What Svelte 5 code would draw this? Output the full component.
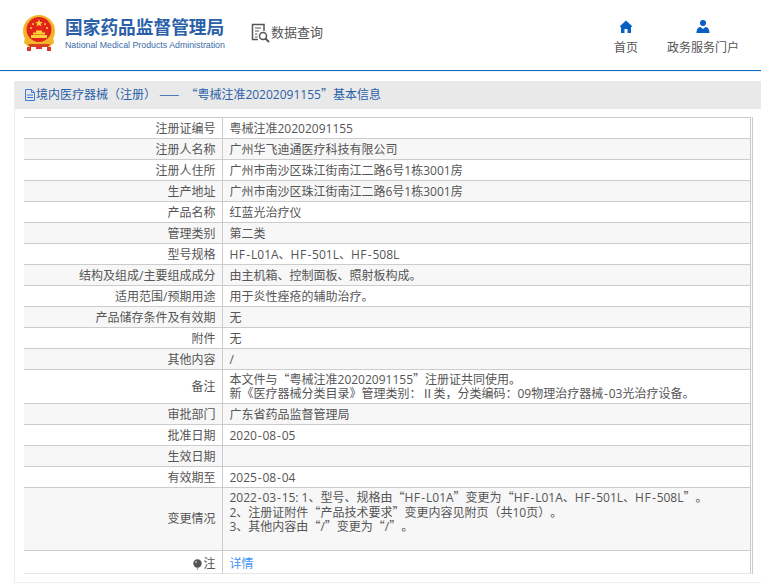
<script>
	const rows = [
		{ label: '注册证编号', value: ['粤械注准20202091155'] },
		{ label: '注册人名称', value: ['广州华飞迪通医疗科技有限公司'] },
		{ label: '注册人住所', value: ['广州市南沙区珠江街南江二路6号1栋3001房'] },
		{ label: '生产地址', value: ['广州市南沙区珠江街南江二路6号1栋3001房'] },
		{ label: '产品名称', value: ['红蓝光治疗仪'] },
		{ label: '管理类别', value: ['第二类'] },
		{ label: '型号规格', value: ['HF-L01A、HF-501L、HF-508L'] },
		{ label: '结构及组成/主要组成成分', value: ['由主机箱、控制面板、照射板构成。'] },
		{ label: '适用范围/预期用途', value: ['用于炎性痤疮的辅助治疗。'] },
		{ label: '产品储存条件及有效期', value: ['无'] },
		{ label: '附件', value: ['无'] },
		{ label: '其他内容', value: ['/'] },
		{
			label: '备注',
			value: [
				'本文件与“粤械注准20202091155”注册证共同使用。',
				'新《医疗器械分类目录》管理类别：Ⅱ类，分类编码：09物理治疗器械-03光治疗设备。'
			],
			cls: 'note'
		},
		{ label: '审批部门', value: ['广东省药品监督管理局'] },
		{ label: '批准日期', value: ['2020-08-05'] },
		{ label: '生效日期', value: [''] },
		{ label: '有效期至', value: ['2025-08-04'] },
		{
			label: '变更情况',
			value: [
				'2022-03-15: 1、型号、规格由“HF-L01A”变更为“HF-L01A、HF-501L、HF-508L”。',
				'2、注册证附件“产品技术要求”变更内容见附页（共10页）。',
				'3、其他内容由“/”变更为“/”。'
			],
			cls: 'change'
		}
	];

	// curly quotes have to come from the CJK font to get their full width, hyphens and HF run wider too
	const parts = (text) => text.split(/([“”-]|HF)/);
</script>

<header class="top">
	<div class="brand">
		<svg class="emblem" width="34" height="36" viewBox="0 0 34 36">
			<circle cx="17" cy="16" r="16" fill="#f2b52a" />
			<circle cx="17" cy="14.5" r="12.5" fill="#e2231a" />
			<polygon points="17,4 18,7 21,7 18.6,8.8 19.5,11.6 17,10 14.5,11.6 15.4,8.8 13,7 16,7" fill="#f8d23a" />
			<circle cx="11" cy="9" r="1" fill="#f8d23a" />
			<circle cx="23" cy="9" r="1" fill="#f8d23a" />
			<circle cx="9" cy="13" r="1" fill="#f8d23a" />
			<circle cx="25" cy="13" r="1" fill="#f8d23a" />
			<path d="M9 20h16v3H9zM11 17.5h12v2H11zM14 15.5h6v2h-6z" fill="#f8d23a" />
			<path d="M3 22c3 6 8 8 14 8s11-2 14-8l1 6-5 4H7l-5-4z" fill="#f2b52a" />
			<path d="M6 29h22l-2 3H8z" fill="#d8401f" />
			<path d="M5 32h4v4H5zM25 32h4v4h-4zM14 31h6v3h-6z" fill="#e0352a" />
		</svg>
		<div class="brand-text">
			<div class="cn">国家药品监督管理局</div>
			<div class="en">National Medical Products Administration</div>
		</div>
	</div>
	<div class="query">
		<svg width="20" height="20" viewBox="0 0 20 20" fill="none" stroke="#555">
			<path d="M13 8V1.5H1.5v15H7" stroke-width="1.5" />
			<path d="M4 5h6M4 8h4M4 11h2.5M4 14h2.5" stroke-width="1.2" />
			<circle cx="12" cy="13" r="3.5" stroke-width="1.5" />
			<path d="M14.5 15.5l3.5 3.5" stroke-width="2" />
		</svg>
		<span>数据查询</span>
	</div>
	<nav class="links">
		<a href="#home">
			<svg width="14" height="13" viewBox="0 0 14 13">
				<path d="M7 0.5L0.5 6.5 2 7v6h3.5V9h3v4H12V7l1.5-.5z" fill="#0a5fc4" />
			</svg>
			<span>首页</span>
		</a>
		<a href="#portal">
			<svg width="14" height="13" viewBox="0 0 14 13">
				<circle cx="7" cy="3" r="3" fill="#0a5fc4" />
				<path d="M0.5 13c0-4 2-6 4-6L7 9l2.5-2c2 0 4 2 4 6z" fill="#0a5fc4" />
			</svg>
			<span>政务服务门户</span>
		</a>
	</nav>
</header>

<main class="page">
	<section class="card">
		<h2 class="title">
			<svg width="10" height="12" viewBox="0 0 10 12" fill="none" stroke="#3a7bd5">
				<path d="M.5.5h6l3 3v8h-9zM2 6h6M2 8.5h6M6.5.5v3h3" />
			</svg>境内医疗器械（注册） <span class="q dash">——</span> <span class="q">“</span>粤械注准20202091155<span class="q">”</span>基本信息
		</h2>
		<table>
			<tbody>
				{#each rows as row, i}
					<tr class={row.cls} class:odd={i % 2 === 1}>
						<td class="label">{row.label}</td>
						<td class="value">
							{#each row.value as line}
								<div>
									{#each parts(line) as part}
										{#if part === '“' || part === '”'}<span class="q">{part}</span>{:else if part === '-'}<span class="h">{part}</span>{:else if part === 'HF'}<span class="hf">{part}</span>{:else}{part}{/if}
									{/each}
								</div>
							{/each}
						</td>
					</tr>
				{/each}
				<tr class="foot">
					<td class="label">
						<svg class="ball" width="9" height="11" viewBox="0 0 9 11">
							<circle cx="4.5" cy="4.5" r="4.2" fill="#555" />
							<circle cx="3" cy="3" r="1.2" fill="#999" />
							<circle cx="4.5" cy="10" r=".8" fill="#888" />
						</svg>注
					</td>
					<td class="value"><a href="#detail">详情</a></td>
				</tr>
			</tbody>
		</table>
	</section>
</main>

<style>
	:global(body) {
		font-family: 'Open Sans', 'Noto Sans CJK SC', sans-serif;
		font-size: 12px;
		color: #555;
		background: #fff;
		text-spacing-trim: space-all;
	}

	.q {
		font-family: 'Noto Sans CJK SC', sans-serif;
		line-height: 0;
	}

	.dash {
		letter-spacing: 2px;
		margin-right: 1px;
	}

	.h {
		padding: 0 0.8px;
	}

	.hf {
		letter-spacing: 0.5px;
	}

	.top {
		height: 70px;
		display: flex;
		align-items: flex-start;
		border-bottom: 1px solid #0a6cc4;
		box-sizing: content-box;
	}

	.brand {
		display: flex;
		align-items: center;
		gap: 9px;
		margin: 15px 0 0 22px;
	}

	.brand-text {
		white-space: nowrap;
	}

	.cn {
		font-size: 17.7px;
		font-weight: 700;
		line-height: 23px;
		color: #2a60a8;
	}

	.en {
		font-family: 'Liberation Sans', sans-serif;
		font-size: 8.8px;
		line-height: 11px;
		margin-top: 1px;
		color: #3d6ba8;
	}

	.query {
		display: flex;
		align-items: center;
		margin: 23px 0 0 26px;
		font-size: 13px;
		color: #555;
	}

	.query span {
		margin-top: -3px;
	}

	.links {
		display: flex;
		gap: 29px;
		margin: 20px 22px 0 auto;
	}

	.links a {
		display: flex;
		flex-direction: column;
		align-items: center;
		gap: 5px;
		color: #555;
		text-decoration: none;
	}

	.page {
		padding: 9px 0 0 14px;
		border-top: 1px dotted #dde6ee;
	}

	.card {
		border: 1px solid #eee;
		border-top: 0;
		border-right: 0;
		padding-bottom: 8px;
	}

	.title {
		margin: 0;
		height: 28px;
		line-height: 28px;
		padding-left: 10px;
		font-size: 12px;
		font-weight: 400;
		background: #e9e9e9;
		color: #2a60a8;
	}

	.title svg {
		vertical-align: -2px;
		margin-right: 1px;
	}

	table {
		width: 729px;
		margin: 8px 0 0 9px;
		border-collapse: collapse;
		border: 1px solid #ccc;
		border-right: 3px double #ccc;
		border-bottom-color: #e6e6e6;
		border-left: 0;
		table-layout: fixed;
	}

	td {
		box-sizing: border-box;
		border-top: 1px solid #ccc;
		padding: 1px 7px 0;
		height: 21px;
		line-height: 14px;
	}

	.label {
		width: 198px;
		padding-right: 6px;
		text-align: right;
		border-right: 1px solid #ccc;
	}

	.odd td {
		background: #f7f7f7;
	}

	.note td {
		height: 34px;
	}

	.change td {
		height: 63px;
		line-height: 14.7px;
	}

	.change .value {
		vertical-align: top;
		padding-top: 3px;
	}

	.foot td {
		height: 23px;
		padding-top: 3px;
	}

	.foot a {
		color: #3f94f0;
		text-decoration: none;
	}

	.ball {
		vertical-align: -2px;
		margin-right: 1px;
	}
</style>
